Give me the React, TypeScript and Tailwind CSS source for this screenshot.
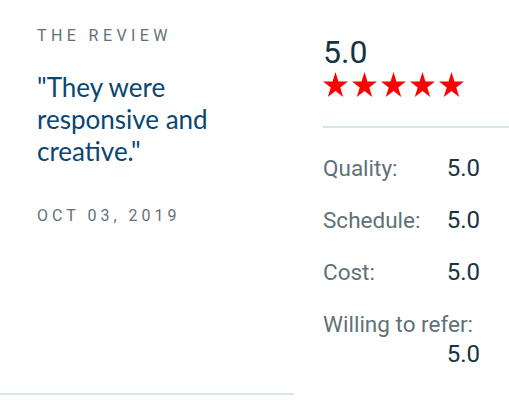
import { Fragment } from "react";

const sans = { fontFamily: "Roboto, 'Liberation Sans', sans-serif" };
const lato = { fontFamily: "Lato, 'Open Sans', sans-serif" };

// 5-point star, squashed a little to match the reference glyph
function Star() {
  return (
    <svg
      width="25"
      height="25"
      viewBox="0 0 26.3 25"
      preserveAspectRatio="none"
      className="block"
    >
      <polygon
        fill="#ff0000"
        points="13.14,0 16.24,9.55 26.28,9.55 18.16,15.45 21.26,25 13.14,19.1 5.02,25 8.12,15.45 0,9.55 10.04,9.55"
      />
    </svg>
  );
}

const ratings = [
  { label: "Quality:", value: "5.0" },
  { label: "Schedule:", value: "5.0" },
  { label: "Cost:", value: "5.0" },
  { label: "Willing to refer:", value: "5.0" },
];

export default function App() {
  return (
    <div className="flex w-[509px] h-[414px] bg-white overflow-hidden" style={sans}>
      {/* left: the review */}
      <div className="w-[294px] shrink-0 flex flex-col">
        <div className="flex-1 pl-[37px] pt-[24px]">
          <div className="text-base leading-6 tracking-[4.4px] text-[#627179]">
            THE REVIEW
          </div>
          <p
            className="mt-[23px] w-[210px] text-[26px] leading-8 text-[#0b4673]"
            style={lato}
          >
            "They were responsive and creative."
          </p>
          <div className="mt-[37px] text-base leading-6 tracking-[4px] text-[#627179]">
            OCT 03, 2019
          </div>
        </div>
        <div className="h-[2px] bg-[#d5e6ec] mb-[19px]" />
      </div>

      {/* right: the scores */}
      <div className="ml-[29px] flex-1 pt-[36px]">
        <div className="text-[32px] leading-8 text-[#17333f]">5.0</div>
        <div className="mt-[4px] flex gap-[4px]">
          {[0, 1, 2, 3, 4].map((i) => (
            <Star key={i} />
          ))}
        </div>
        <div className="mt-[29px] h-[2px] bg-[#d5e6ec]" />
        <div className="mt-[25px] w-[157px] flex flex-col gap-[22px]">
          {ratings.map((r) => (
            <div key={r.label} className="flex flex-wrap items-baseline justify-between">
              <span className="text-[22.5px] leading-[30px] text-[#5f7178]">{r.label}</span>
              <span className="ml-auto text-[24px] leading-[30px] text-[#17333f]">{r.value}</span>
            </div>
          ))}
        </div>
      </div>
    </div>
  );
}
